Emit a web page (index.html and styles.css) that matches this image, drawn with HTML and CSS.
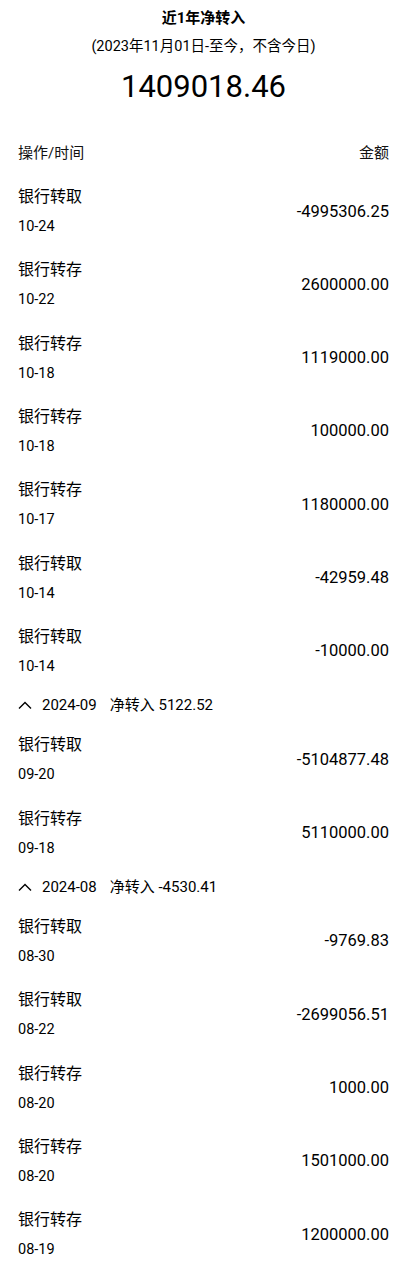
FILE: index.html
```html
<!DOCTYPE html>
<html lang="zh-CN">
<head>
<meta charset="utf-8">
<link rel="stylesheet" href="styles.css">
</head>
<body>
<div class="summary">
  <div class="summary-title">近1年净转入</div>
  <div class="summary-range">(2023年11月01日-至今，不含今日)</div>
  <div class="summary-value">1409018.46</div>
</div>
<div class="list-head">
  <span>操作/时间</span>
  <span>金额</span>
</div>
<div class="list">
  <div class="row"><div class="info"><div class="op">银行转取</div><div class="date">10-24</div></div><div class="amount">-4995306.25</div></div>
  <div class="row"><div class="info"><div class="op">银行转存</div><div class="date">10-22</div></div><div class="amount">2600000.00</div></div>
  <div class="row"><div class="info"><div class="op">银行转存</div><div class="date">10-18</div></div><div class="amount">1119000.00</div></div>
  <div class="row"><div class="info"><div class="op">银行转存</div><div class="date">10-18</div></div><div class="amount">100000.00</div></div>
  <div class="row"><div class="info"><div class="op">银行转存</div><div class="date">10-17</div></div><div class="amount">1180000.00</div></div>
  <div class="row"><div class="info"><div class="op">银行转取</div><div class="date">10-14</div></div><div class="amount">-42959.48</div></div>
  <div class="row"><div class="info"><div class="op">银行转取</div><div class="date">10-14</div></div><div class="amount">-10000.00</div></div>

  <div class="month">
    <svg class="chev" width="14" height="8" viewBox="0 0 14 8"><polyline points="1,7.5 7,1.5 13,7.5" fill="none" stroke="#000" stroke-width="1.4"/></svg>
    <span class="month-name">2024-09</span>
    <span class="month-net">净转入 5122.52</span>
  </div>
  <div class="row"><div class="info"><div class="op">银行转取</div><div class="date">09-20</div></div><div class="amount">-5104877.48</div></div>
  <div class="row"><div class="info"><div class="op">银行转存</div><div class="date">09-18</div></div><div class="amount">5110000.00</div></div>

  <div class="month">
    <svg class="chev" width="14" height="8" viewBox="0 0 14 8"><polyline points="1,7.5 7,1.5 13,7.5" fill="none" stroke="#000" stroke-width="1.4"/></svg>
    <span class="month-name">2024-08</span>
    <span class="month-net">净转入 -4530.41</span>
  </div>
  <div class="row"><div class="info"><div class="op">银行转取</div><div class="date">08-30</div></div><div class="amount">-9769.83</div></div>
  <div class="row"><div class="info"><div class="op">银行转取</div><div class="date">08-22</div></div><div class="amount">-2699056.51</div></div>
  <div class="row"><div class="info"><div class="op">银行转存</div><div class="date">08-20</div></div><div class="amount">1000.00</div></div>
  <div class="row"><div class="info"><div class="op">银行转存</div><div class="date">08-20</div></div><div class="amount">1501000.00</div></div>
  <div class="row"><div class="info"><div class="op">银行转存</div><div class="date">08-19</div></div><div class="amount">1200000.00</div></div>
</div>
</body>
</html>
```

FILE: styles.css
```css
* { box-sizing: border-box; }
html, body { margin: 0; padding: 0; background: #fff; }
body {
  width: 400px;
  padding: 8px 11px 0 18px;
  font-family: Roboto, "Noto Sans CJK SC", sans-serif;
  color: #000;
}
.summary {
  display: flex;
  flex-direction: column;
  align-items: center;
}
.summary-title {
  font-size: 15px;
  line-height: 20px;
  font-weight: 700;
}
.summary-range {
  margin-top: 9px;
  font-size: 14.5px;
  line-height: 20px;
}
.summary-value {
  margin-top: 12px;
  font-size: 31px;
  line-height: 36px;
}
.list-head {
  display: flex;
  justify-content: space-between;
  margin-top: 38px;
  margin-bottom: 11px;
  font-size: 15px;
  line-height: 20px;
  color: #111;
}
.row {
  display: flex;
  justify-content: space-between;
  align-items: center;
  height: 73.33px;
  padding: 11px 0 10.33px;
}
.info { display: flex; flex-direction: column; }
.op {
  font-size: 16px;
  line-height: 24px;
}
.date {
  margin-top: 8px;
  font-size: 14.5px;
  line-height: 20px;
}
.amount {
  font-size: 16.5px;
  line-height: 22px;
  margin-top: 1px;
}
.month {
  display: flex;
  align-items: center;
  height: 35px;
  padding: 8px 0 7px;
  font-size: 15px;
  line-height: 20px;
}
.chev { display: block; margin-right: 10px; }
.month-name { margin-right: 13px; }
```
